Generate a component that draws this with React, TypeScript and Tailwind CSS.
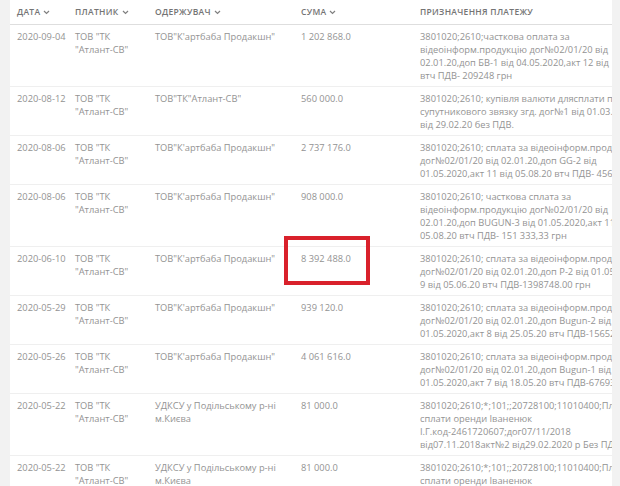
import React from "react";

type Row = {
  date: string;
  payer: string[];
  recv: string[];
  sum: string;
  purpose: string[];
};

const payer = ['ТОВ "ТК', '"Атлант-СВ"'];
const kart = ['ТОВ"К\'артбаба Продакшн"'];
const udksu = ["УДКСУ у Подільському р-ні", "м.Києва"];

const rows: Row[] = [
  {
    date: "2020-09-04",
    payer,
    recv: kart,
    sum: "1 202 868.0",
    purpose: [
      "3801020;2610;часткова оплата за",
      "відеоінформ.продукцію дог№02/01/20 від",
      "02.01.20,доп БВ-1 від 04.05.2020,акт 12 від",
      "втч ПДВ- 209248 грн",
    ],
  },
  {
    date: "2020-08-12",
    payer,
    recv: ['ТОВ"ТК"Атлант-СВ"'],
    sum: "560 000.0",
    purpose: [
      "3801020;2610; купівля валюти дляcплати послуг",
      "супутникового звязку згд. дог№1 від 01.03.20",
      "від 29.02.20 без ПДВ.",
    ],
  },
  {
    date: "2020-08-06",
    payer,
    recv: kart,
    sum: "2 737 176.0",
    purpose: [
      "3801020;2610; сплата за відеоінформ.продукцію",
      "дог№02/01/20 від 02.01.20,доп GG-2 від",
      "01.05.2020,акт 11 від 05.08.20 втч ПДВ- 456196",
    ],
  },
  {
    date: "2020-08-06",
    payer,
    recv: kart,
    sum: "908 000.0",
    purpose: [
      "3801020;2610; часткова сплата за",
      "відеоінформ.продукцію дог№02/01/20 від",
      "02.01.20,доп BUGUN-3 від 01.05.2020,акт 11 від",
      "05.08.20 втч ПДВ- 151 333,33 грн",
    ],
  },
  {
    date: "2020-06-10",
    payer,
    recv: kart,
    sum: "8 392 488.0",
    purpose: [
      "3801020;2610; сплата за відеоінформ.продукцію",
      "дог№02/01/20 від 02.01.20,доп P-2 від 01.05.2020,акт",
      "9 від 05.06.20 втч ПДВ-1398748.00 грн",
    ],
  },
  {
    date: "2020-05-29",
    payer,
    recv: kart,
    sum: "939 120.0",
    purpose: [
      "3801020;2610; сплата за відеоінформ.продукцію",
      "дог№02/01/20 від 02.01.20,доп Bugun-2 від",
      "01.05.2020,акт 8 від 25.05.20 втч ПДВ-156520",
    ],
  },
  {
    date: "2020-05-26",
    payer,
    recv: kart,
    sum: "4 061 616.0",
    purpose: [
      "3801020;2610; сплата за відеоінформ.продукцію",
      "дог№02/01/20 від 02.01.20,доп Bugun-1 від",
      "01.05.2020,акт 7 від 18.05.20 втч ПДВ-676936",
    ],
  },
  {
    date: "2020-05-22",
    payer,
    recv: udksu,
    sum: "81 000.0",
    purpose: [
      "3801020;2610;*;101;;20728100;11010400;Плата за",
      "сплати оренди Іваненюк",
      "І.Г.код-2461720607;дог07/11/2018",
      "від07.11.2018акт№2 від29.02.2020 р Без ПДВ",
    ],
  },
  {
    date: "2020-05-22",
    payer,
    recv: udksu,
    sum: "81 000.0",
    purpose: [
      "3801020;2610;*;101;;20728100;11010400;Плата за",
      "сплати оренди Іваненюк",
      "І.Г.код-2461720607;дог07/11/2018",
      "від07.11.2018акт№2 від29.02.2020 р Без ПДВ",
    ],
  },
];

function Chevron() {
  return (
    <svg width="7" height="5" viewBox="0 0 7 5" className="ml-[3px] mt-[1px]">
      <path d="M1 1 L3.5 3.5 L6 1" fill="none" stroke="#808080" strokeWidth="1.2" />
    </svg>
  );
}

function Head({ label, chevron = true }: { label: string; chevron?: boolean }) {
  return (
    <div className="flex items-center pl-[7px]">
      <span>{label}</span>
      {chevron && <Chevron />}
    </div>
  );
}

function Lines({ lines }: { lines: string[] }) {
  return (
    <div className="pl-[7px]">
      {lines.map((l, i) => (
        <div key={i} className="whitespace-nowrap">
          {l}
        </div>
      ))}
    </div>
  );
}

const cols = "grid grid-cols-[58px_80px_146px_119px_220px]";

export default function App() {
  return (
    <div
      className="w-[620px] h-[486px] bg-[#f2f2f2] flex overflow-hidden"
      style={{ fontFamily: '"Open Sans", "Noto Sans", sans-serif' }}
    >
      <div className="ml-[10px] w-[602px] h-full bg-white relative overflow-hidden">
        <div
          className={`${cols} h-[25px] items-center border-b border-[#dedede] text-[8.5px] font-semibold tracking-[0.3px] text-[#747474]`}
        >
          <Head label="ДАТА" />
          <Head label="ПЛАТНИК" />
          <Head label="ОДЕРЖУВАЧ" />
          <Head label="СУМА" />
          <Head label="ПРИЗНАЧЕННЯ ПЛАТЕЖУ" chevron={false} />
        </div>
        {rows.map((r, i) => (
          <div
            key={i}
            className={`${cols} pt-[5px] pb-[4px] border-b border-[#efefef] text-[9.3px] leading-[13px] text-[#939393]`}
          >
            <Lines lines={[r.date]} />
            <Lines lines={r.payer} />
            <Lines lines={r.recv} />
            <Lines lines={[r.sum]} />
            <Lines lines={r.purpose} />
          </div>
        ))}
        <div className="absolute left-[274px] top-[236px] w-[86px] h-[49px] border-[4px] border-[#d9212b]" />
      </div>
    </div>
  );
}
